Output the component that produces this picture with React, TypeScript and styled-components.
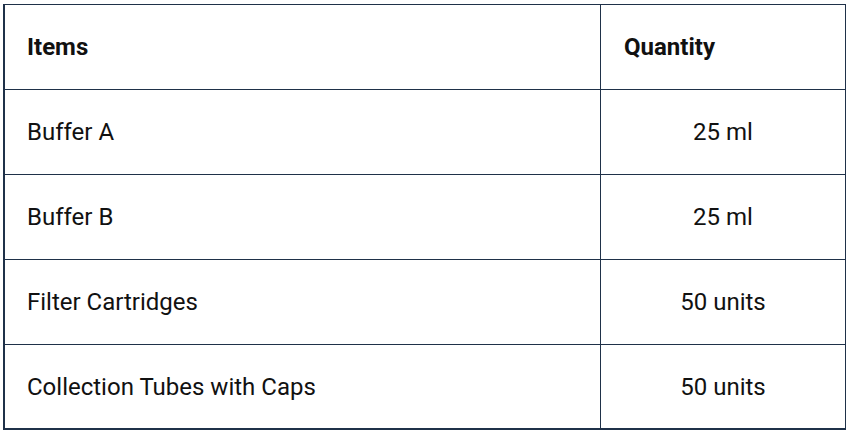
import React from "react";
import styled, { createGlobalStyle } from "styled-components";

const Global = createGlobalStyle`
  html, body { margin: 0; padding: 0; background: #ffffff; }
  body { font-family: Roboto, "Noto Sans", Arial, sans-serif; color: #111111; }
`;

const Page = styled.div`
  padding: 4px 0 0 3px;
`;

const Table = styled.div`
  width: 843px;
  box-sizing: border-box;
  border-top: 1px solid #1f3149;
  border-left: 2px solid #1f3149;
  border-right: 1px solid #1f3149;
  border-bottom: 2px solid #1f3149;
  display: flex;
  flex-direction: column;
`;

const Row = styled.div<{ $last?: boolean }>`
  display: grid;
  grid-template-columns: 595px 1fr;
  height: ${(p) => (p.$last ? 83 : 85)}px;
  box-sizing: border-box;
  border-bottom: ${(p) => (p.$last ? "none" : "1px solid #1f3149")};
`;

const Cell = styled.div<{ $head?: boolean; $center?: boolean; $divider?: boolean }>`
  display: flex;
  align-items: center;
  justify-content: ${(p) => (p.$center ? "center" : "flex-start")};
  padding-left: ${(p) => (p.$center ? 0 : p.$divider ? 23 : 22)}px;
  border-left: ${(p) => (p.$divider ? "1px solid #1f3149" : "none")};
  font-size: 24px;
  font-weight: ${(p) => (p.$head ? 700 : 400)};
  color: #111111;
  white-space: nowrap;
`;

const rows = [
  ["Buffer A", "25 ml"],
  ["Buffer B", "25 ml"],
  ["Filter Cartridges", "50 units"],
  ["Collection Tubes with Caps", "50 units"],
];

export default function App() {
  return (
    <Page>
      <Global />
      <Table>
        <Row>
          <Cell $head>Items</Cell>
          <Cell $head $divider>Quantity</Cell>
        </Row>
        {rows.map(([item, qty], i) => (
          <Row key={item} $last={i === rows.length - 1}>
            <Cell>{item}</Cell>
            <Cell $center $divider>{qty}</Cell>
          </Row>
        ))}
      </Table>
    </Page>
  );
}
